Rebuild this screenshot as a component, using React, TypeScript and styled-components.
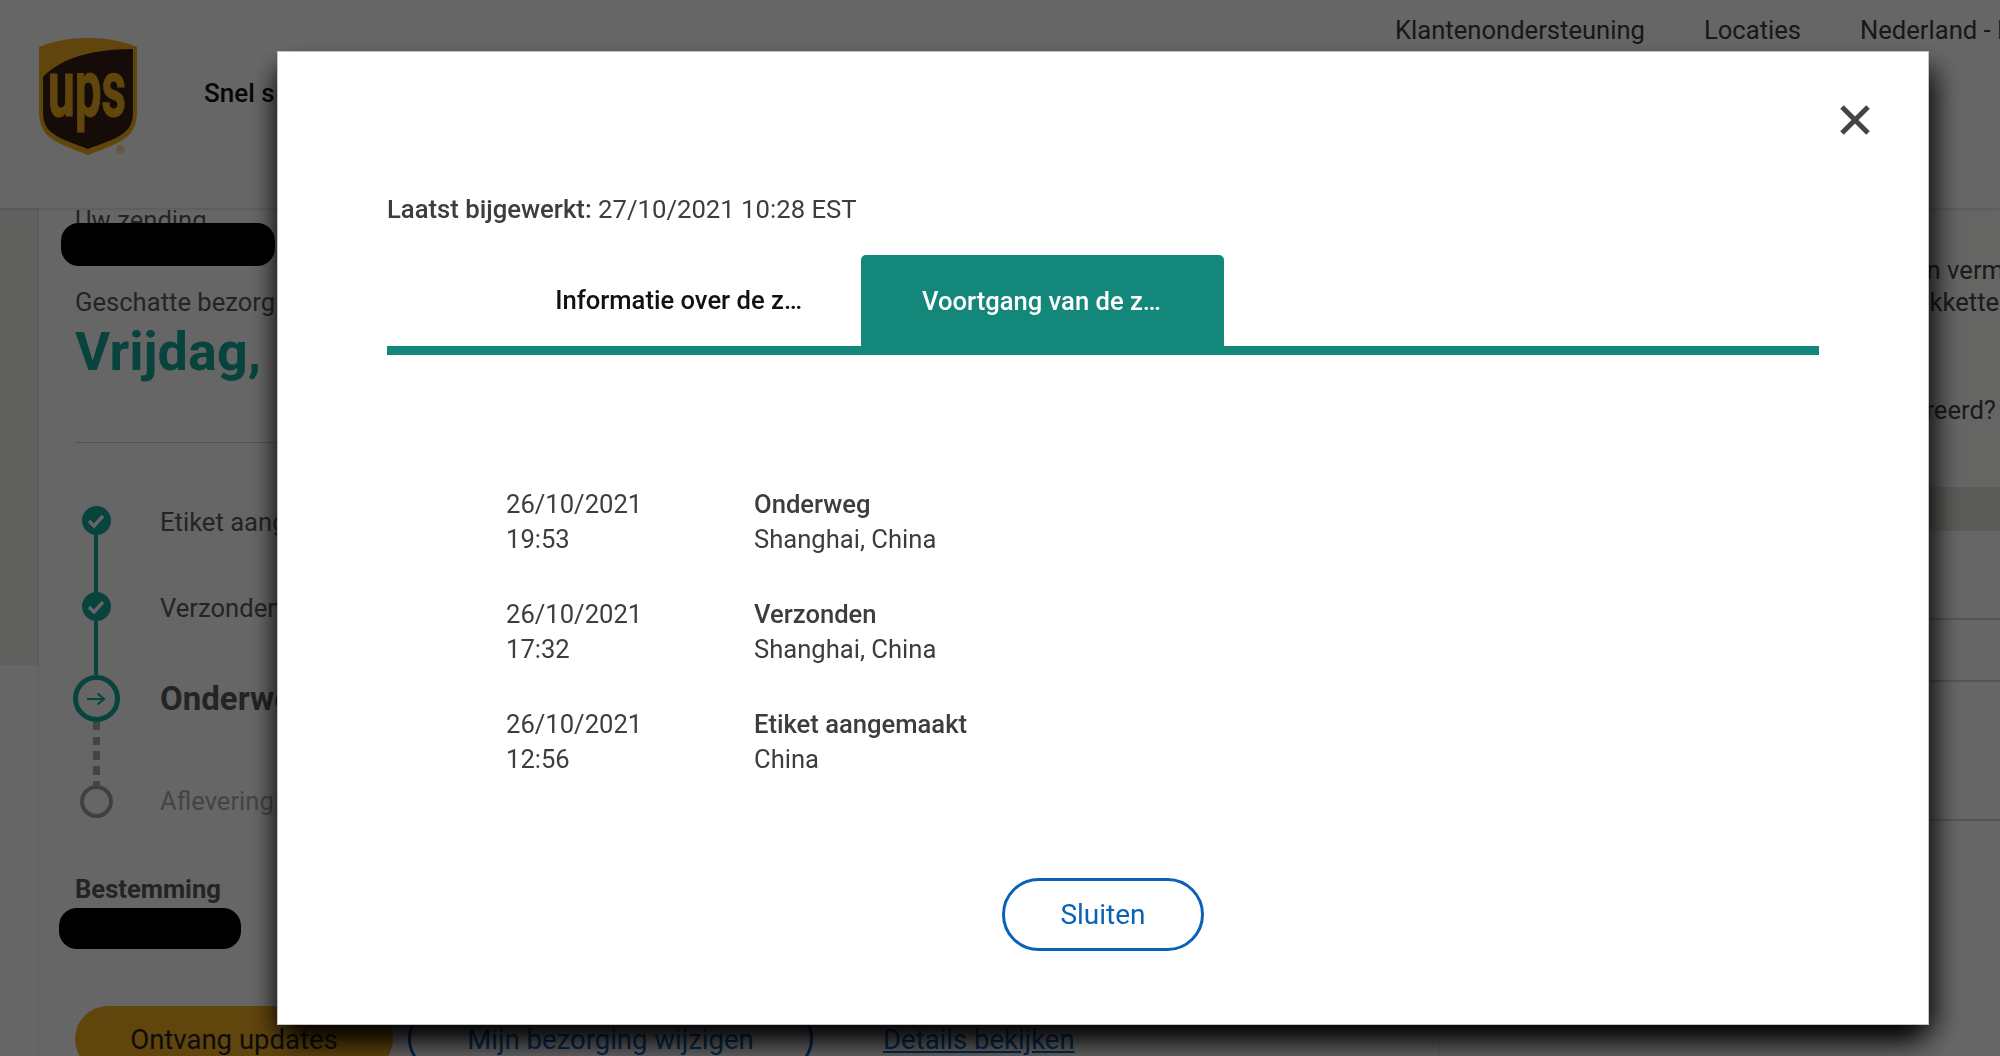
import React from "react"
import styled, { createGlobalStyle } from "styled-components"

const GlobalStyle = createGlobalStyle`
  html, body {
    margin: 0;
    padding: 0;
    width: 2000px;
    height: 1056px;
    overflow: hidden;
    background: #fff;
    font-family: Roboto, "Liberation Sans", sans-serif;
    color: #5a5a5a;
  }
  * { box-sizing: border-box; }
`

const Page = styled.div`
  width: 2000px;
  height: 1056px;
  overflow: hidden;
  display: flex;
  flex-direction: column;
  background: #fff;
`

const Header = styled.header`
  height: 208px;
  flex: none;
  background: #fff;
  display: flex;
  padding-left: 38px;
  box-shadow: 0 1px 3px rgba(0, 0, 0, 0.15);
  position: relative;
  z-index: 1;
`

const LogoBox = styled.div`
  padding-top: 37px;
  width: 166px;
  flex: none;
`

const LogoSvg = styled.svg`
  display: block;
  overflow: visible;
`

const QuickLink = styled.div`
  padding-top: 78px;
  font-size: 26px;
  font-weight: 500;
  color: #111;
  white-space: nowrap;
`

const TopLinks = styled.nav`
  margin-left: auto;
  height: 60px;
  display: flex;
  align-items: center;
  font-size: 25.6px;
  color: #3c3c3c;
  white-space: nowrap;
  width: 605px;
  overflow: hidden;
  flex: none;
`

const TopDivider = styled.span`
  width: 2px;
  height: 22px;
  margin: 0 29.5px;
  background: #999;
`

const Body = styled.main`
  flex: 1;
  display: flex;
  min-height: 0;
`

const Gutter = styled.div`
  width: 38px;
  flex: none;
  height: 457px;
  background: #f0f0ee;
  border-right: 1px solid #e4e4e2;
`

const LeftCard = styled.section`
  width: 1402px;
  flex: none;
  padding: 0 0 0 36px;
  border-left: 1px solid #eee;
  border-right: 1px solid #eee;
`

const ShipmentLabel = styled.div`
  font-size: 25.6px;
  line-height: 30px;
  margin-top: -3px;
  height: 30px;
`

/* zwarte balk ligt over de tekst heen */
const Redaction = styled.div<{ $width: number; $height: number; $left: number; $top: number }>`
  position: relative;
  width: ${(p) => p.$width}px;
  height: ${(p) => p.$height}px;
  margin: ${(p) => p.$top}px 0 0 ${(p) => p.$left}px;
  border-radius: 18px;
  background: #000;
`

const EstimateLabel = styled.div`
  margin-top: 21px;
  font-size: 25.6px;
  line-height: 30px;
`

const EstimateDay = styled.div`
  font-size: 54px;
  line-height: 70px;
  font-weight: 700;
  color: #18a899;
`

const Divider = styled.div`
  margin-top: 55px;
  height: 1px;
  background: #ccc;
  width: 400px;
`

const Steps = styled.ol`
  list-style: none;
  margin: 63px 0 0;
  padding: 0;
  display: flex;
  flex-direction: column;
`

const Step = styled.li<{ $height: number }>`
  display: flex;
  align-items: flex-start;
  height: ${(p) => p.$height}px;
`

const StepMarker = styled.div`
  width: 48px;
  flex: none;
  margin-left: -3px;
  display: flex;
  flex-direction: column;
  align-items: center;
  height: 100%;
`

const StepDot = styled.div<{ $size: number; $mode: "done" | "current" | "todo" }>`
  width: ${(p) => p.$size}px;
  height: ${(p) => p.$size}px;
  flex: none;
  border-radius: 50%;
  display: flex;
  align-items: center;
  justify-content: center;
  background: ${(p) => (p.$mode === "done" ? "#18a899" : "transparent")};
  border: ${(p) =>
    p.$mode === "current" ? "5px solid #18a899" : p.$mode === "todo" ? "4px solid #a0a0a0" : "none"};
`

const StepLine = styled.div<{ $dotted?: boolean }>`
  width: ${(p) => (p.$dotted ? 7 : 4)}px;
  flex: 1;
  ${(p) =>
    p.$dotted
      ? "background: repeating-linear-gradient(to bottom, #aaa 0 8.5px, transparent 8.5px 14.7px);"
      : "background: #18a899;"}
`

const StepText = styled.div<{ $strong?: boolean; $muted?: boolean }>`
  margin: 1px 0 0 40px;
  font-size: ${(p) => (p.$strong ? 33 : 25.6)}px;
  font-weight: ${(p) => (p.$strong ? 700 : 400)};
  line-height: ${(p) => (p.$strong ? 46 : 30)}px;
  color: ${(p) => (p.$muted ? "#aaa" : "#5a5a5a")};
  white-space: nowrap;
`

const DestinationLabel = styled.div`
  margin-top: 39px;
  font-size: 25.6px;
  font-weight: 700;
  line-height: 30px;
`

const Actions = styled.div`
  margin-top: 57px;
  display: flex;
  align-items: center;
  font-size: 27.5px;
  height: 66px;
`

const UpdatesButton = styled.div`
  width: 318px;
  height: 66px;
  border-radius: 33px;
  background: #f0ac20;
  color: #222;
  display: flex;
  align-items: center;
  justify-content: center;
  flex: none;
`

const ChangeButton = styled.div`
  margin-left: 15px;
  width: 405px;
  height: 66px;
  border-radius: 33px;
  border: 3px solid #0a66c2;
  color: #0a66c2;
  display: flex;
  align-items: center;
  justify-content: center;
  flex: none;
`

const DetailsLink = styled.div`
  margin-left: 70px;
  color: #0a66c2;
  text-decoration: underline;
`

const RightColumn = styled.aside`
  flex: 1;
  display: flex;
  flex-direction: column;
  min-width: 0;
`

const InfoPanel = styled.div`
  height: 279px;
  flex: none;
  background: #fdfdfb;
  font-size: 25.6px;
  line-height: 32px;
  color: #444;
  white-space: nowrap;
  padding: 46px 0 0 370px;
  box-shadow: 0 2px 4px rgba(0, 0, 0, 0.1);
`

const InfoLine = styled.div<{ $gap?: number; $indent?: number }>`
  margin-top: ${(p) => p.$gap ?? 0}px;
  margin-left: ${(p) => p.$indent ?? 0}px;
`

const SideGap = styled.div`
  height: 44px;
  flex: none;
  background: #e4e4e0;
`

const SideRow = styled.div<{ $height: number }>`
  height: ${(p) => p.$height}px;
  flex: none;
  background: #fff;
  border-bottom: 2px solid #d4d4c8;
`

const Overlay = styled.div`
  position: fixed;
  inset: 0;
  z-index: 5;
  background: rgba(0, 0, 0, 0.6);
`

const Modal = styled.div`
  position: fixed;
  z-index: 6;
  left: 277px;
  top: 51px;
  width: 1652px;
  height: 974px;
  background: #fff;
  padding: 143px 110px 0;
  display: flex;
  flex-direction: column;
  color: #3d3d3d;
  box-shadow: inset 0 0 0 1px #c4c4c4, 0 22px 30px -6px rgba(0, 0, 0, 0.92),
    14px 10px 24px -6px rgba(0, 0, 0, 0.6), -8px 10px 20px -6px rgba(0, 0, 0, 0.5);
`

const CloseButton = styled.button`
  position: absolute;
  right: 55px;
  top: 50px;
  width: 38px;
  height: 38px;
  border: none;
  padding: 0;
  background: none;
  color: #444;
`

const Updated = styled.div`
  font-size: 25.7px;
  line-height: 30px;
  b {
    font-weight: 500;
  }
`

const Tabs = styled.div`
  margin-top: 31px;
  height: 100px;
  display: flex;
  border-bottom: 9px solid #14877b;
`

const Tab = styled.div<{ $active?: boolean }>`
  width: ${(p) => (p.$active ? 363 : 474)}px;
  height: ${(p) => (p.$active ? 100 : 91)}px;
  flex: none;
  display: flex;
  align-items: center;
  justify-content: ${(p) => (p.$active ? "center" : "flex-end")};
  padding-right: ${(p) => (p.$active ? 2 : 59)}px;
  padding-bottom: ${(p) => (p.$active ? 8 : 2)}px;
  font-size: 25.6px;
  font-weight: 500;
  color: ${(p) => (p.$active ? "#fff" : "#111")};
  background: ${(p) => (p.$active ? "#14877b" : "transparent")};
  border-radius: ${(p) => (p.$active ? "5px 5px 0 0" : "0")};
`

const Timeline = styled.div`
  margin-top: 132px;
  padding-left: 119px;
  display: flex;
  flex-direction: column;
  gap: 40px;
`

const TimelineRow = styled.div`
  display: grid;
  grid-template-columns: 248px 1fr;
  font-size: 25.6px;
  line-height: 35px;
`

const EventName = styled.div`
  font-weight: 500;
`

const Footer = styled.div`
  margin-top: 101px;
  display: flex;
  justify-content: center;
`

const CloseAction = styled.button`
  width: 202px;
  height: 73px;
  border: 3px solid #0a62b8;
  border-radius: 37px;
  background: #fff;
  color: #0a62b8;
  font-family: inherit;
  font-size: 28px;
  padding: 0;
`

const UpsLogo = () => (
  <LogoSvg width="100" height="118" viewBox="0 0 100 118">
    <path
      d="M1 10C15 4 32 1 50 1s35 3 49 9v64c0 11-3 19-9 25-9 8-25 13-40 19-15-6-31-11-40-19-6-6-9-14-9-25Z"
      fill="#f0ac20"
    />
    <path
      d="M5 40C20 24 48 12 95 12v62c0 9-2 16-8 21-8 7-24 12-37 17-13-5-29-10-37-17-6-5-8-12-8-21Z"
      fill="#351c15"
    />
    <text
      x="10"
      y="79"
      fontFamily="Roboto, sans-serif"
      fontSize="80"
      fontWeight="700"
      fill="#f0ac20"
      stroke="#f0ac20"
      strokeWidth="1.2"
      textLength="78"
      lengthAdjust="spacingAndGlyphs"
    >
      ups
    </text>
    <text x="78" y="117" fontFamily="Roboto, sans-serif" fontSize="11" fill="#f0ac20">
      ®
    </text>
  </LogoSvg>
)

const CheckIcon = () => (
  <svg width="20" height="16" viewBox="0 0 20 16">
    <path d="M3 8l5 5 9-10" fill="none" stroke="#fff" strokeWidth="3.4" />
  </svg>
)

const ArrowIcon = () => (
  <svg width="20" height="16" viewBox="0 0 20 16">
    <path d="M1 8h17M11.5 2.5 18 8l-6.5 5.5" fill="none" stroke="#18a899" strokeWidth="2.2" />
  </svg>
)

const CloseIcon = () => (
  <svg width="38" height="38" viewBox="0 0 38 38">
    <path d="M6 6l26 26M32 6 6 32" fill="none" stroke="currentColor" strokeWidth="5" />
  </svg>
)

const events = [
  { date: "26/10/2021", time: "19:53", name: "Onderweg", place: "Shanghai, China" },
  { date: "26/10/2021", time: "17:32", name: "Verzonden", place: "Shanghai, China" },
  { date: "26/10/2021", time: "12:56", name: "Etiket aangemaakt", place: "China" },
]

export default function App() {
  return (
    <>
      <GlobalStyle />
      <Page>
        <Header>
          <LogoBox>
            <UpsLogo />
          </LogoBox>
          <QuickLink>Snel s</QuickLink>
          <TopLinks>
            Klantenondersteuning
            <TopDivider />
            Locaties
            <TopDivider />
            Nederland - Nederlands
          </TopLinks>
        </Header>
        <Body>
          <Gutter />
          <LeftCard>
            <ShipmentLabel>Uw zending</ShipmentLabel>
            <Redaction $width={214} $height={43} $left={-14} $top={-12} />
            <EstimateLabel>Geschatte bezorging</EstimateLabel>
            <EstimateDay>Vrijdag,</EstimateDay>
            <Divider />
            <Steps>
              <Step $height={86}>
                <StepMarker>
                  <StepDot $size={29} $mode="done">
                    <CheckIcon />
                  </StepDot>
                  <StepLine />
                </StepMarker>
                <StepText>Etiket aangemaakt</StepText>
              </Step>
              <Step $height={83}>
                <StepMarker>
                  <StepDot $size={29} $mode="done">
                    <CheckIcon />
                  </StepDot>
                  <StepLine />
                </StepMarker>
                <StepText>Verzonden</StepText>
              </Step>
              <Step $height={110}>
                <StepMarker>
                  <StepDot $size={47} $mode="current">
                    <ArrowIcon />
                  </StepDot>
                  <StepLine $dotted />
                </StepMarker>
                <StepText $strong>Onderweg</StepText>
              </Step>
              <Step $height={50}>
                <StepMarker>
                  <StepDot $size={33} $mode="todo" />
                </StepMarker>
                <StepText $muted>Aflevering</StepText>
              </Step>
            </Steps>
            <DestinationLabel>Bestemming</DestinationLabel>
            <Redaction $width={182} $height={41} $left={-16} $top={4} />
            <Actions>
              <UpdatesButton>Ontvang updates</UpdatesButton>
              <ChangeButton>Mijn bezorging wijzigen</ChangeButton>
              <DetailsLink>Details bekijken</DetailsLink>
            </Actions>
          </LeftCard>
          <RightColumn>
            <InfoPanel>
              <InfoLine>Heeft u een vermelding</InfoLine>
              <InfoLine $indent={5}>van uw pakketten</InfoLine>
              <InfoLine $gap={76} $indent={-6}>
                Al geregistreerd?
              </InfoLine>
            </InfoPanel>
            <SideGap />
            <SideRow $height={89} />
            <SideRow $height={62} />
            <SideRow $height={139} />
          </RightColumn>
        </Body>
      </Page>
      <Overlay />
      <Modal>
        <CloseButton aria-label="Sluiten">
          <CloseIcon />
        </CloseButton>
        <Updated>
          <b>Laatst bijgewerkt:</b> 27/10/2021 10:28 EST
        </Updated>
        <Tabs>
          <Tab>Informatie over de z…</Tab>
          <Tab $active>Voortgang van de z…</Tab>
        </Tabs>
        <Timeline>
          {events.map((event) => (
            <TimelineRow key={event.time}>
              <div>
                {event.date}
                <br />
                {event.time}
              </div>
              <div>
                <EventName>{event.name}</EventName>
                {event.place}
              </div>
            </TimelineRow>
          ))}
        </Timeline>
        <Footer>
          <CloseAction>Sluiten</CloseAction>
        </Footer>
      </Modal>
    </>
  )
}
